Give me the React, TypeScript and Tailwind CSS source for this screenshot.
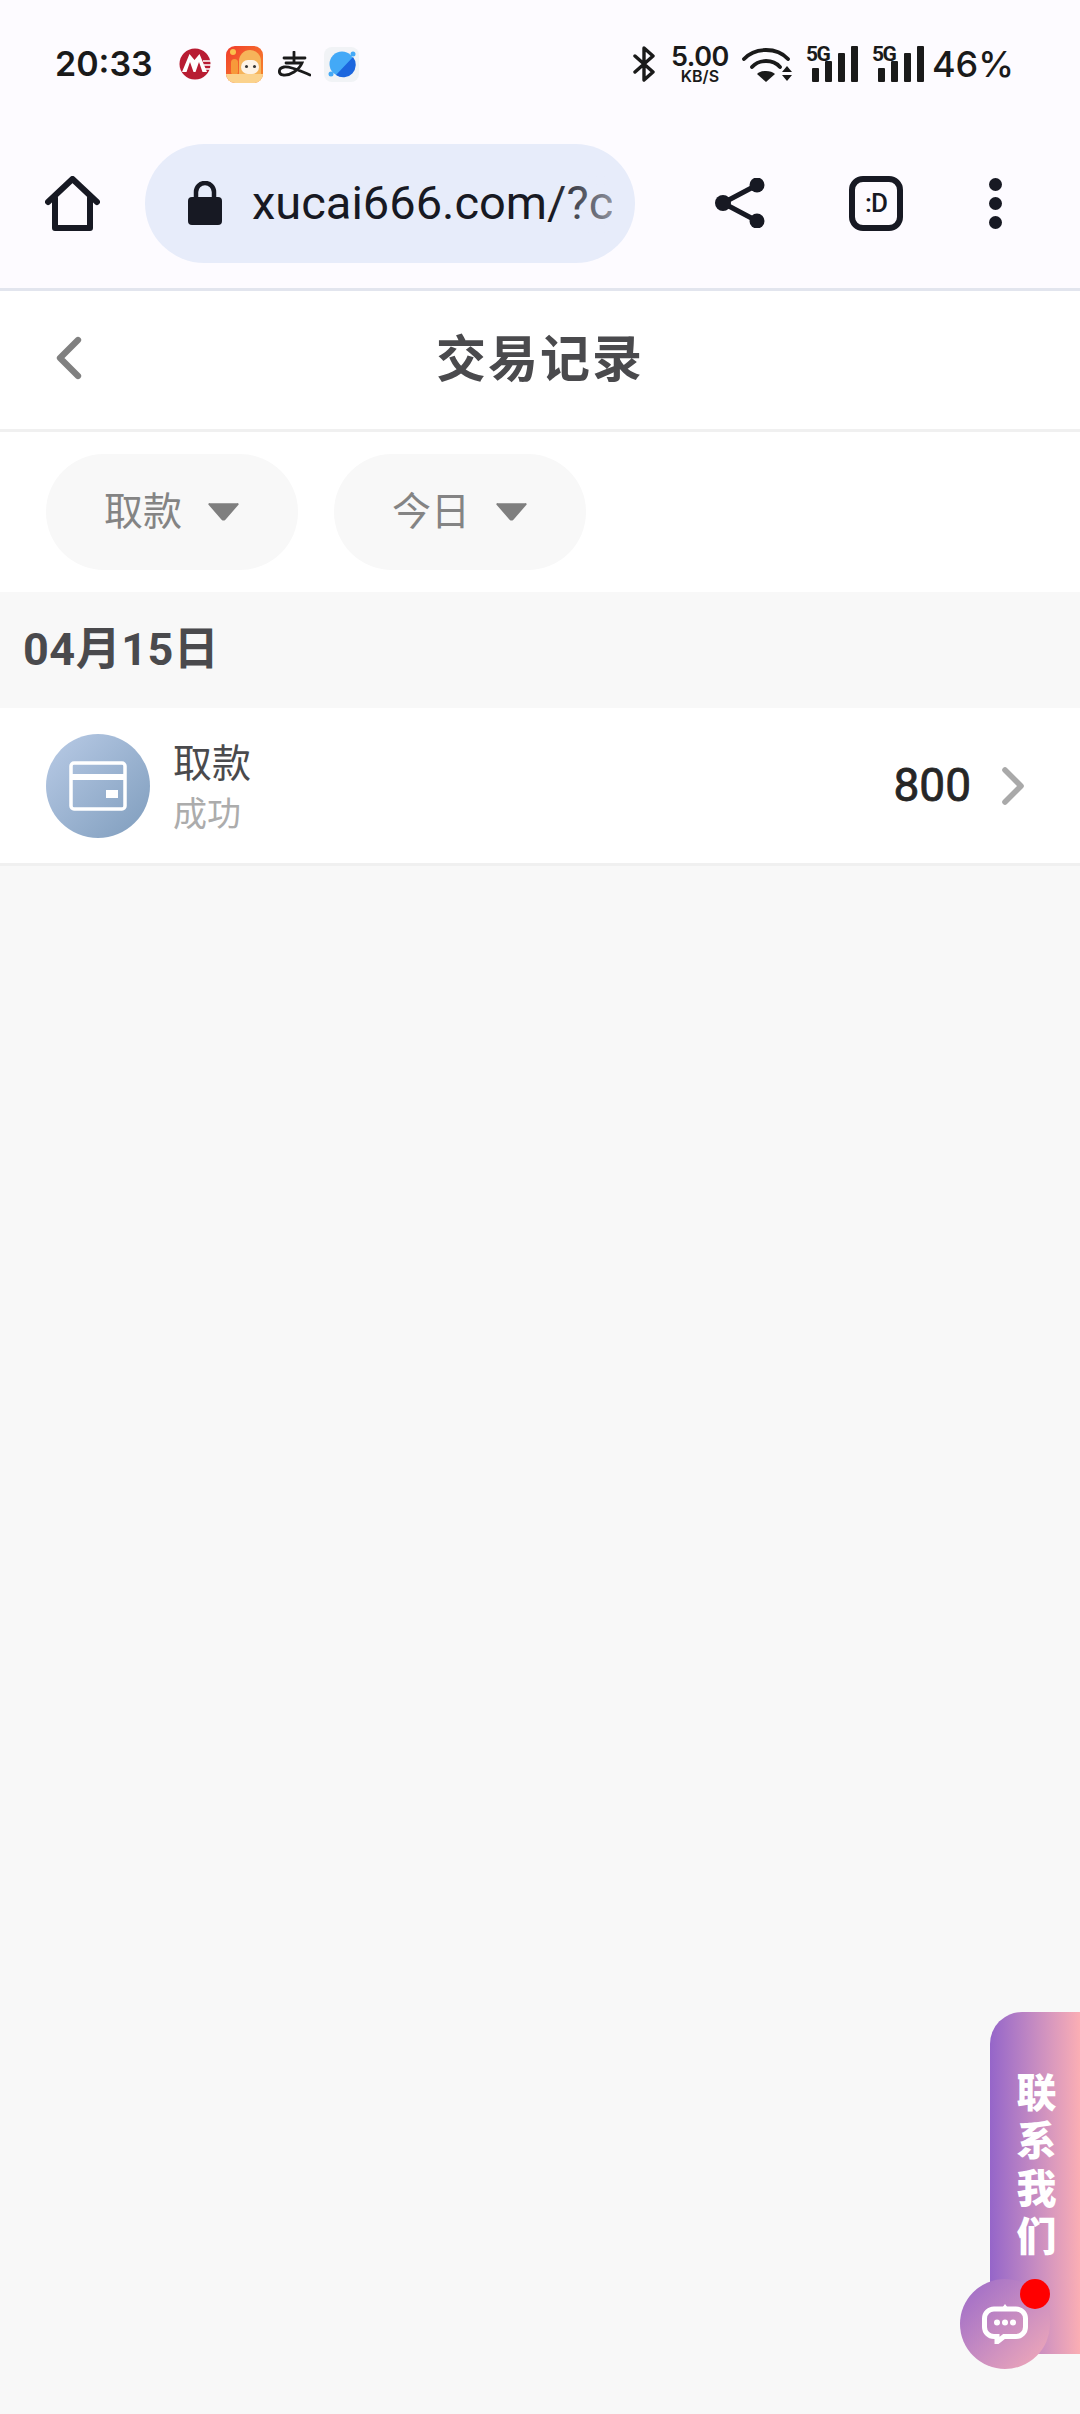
import { ChevronLeft, ChevronRight } from 'lucide-react';

const Signal = () => (
  <div className="relative w-[53px] h-[36px]">
    <span className="absolute left-0 top-[-2px] text-[21px] leading-[21px] font-bold tracking-[-1.5px] text-[#1a1a1a] [font-family:'Roboto',sans-serif]">5G</span>
    <svg viewBox="0 0 53 36" className="absolute inset-0 w-[53px] h-[36px]" fill="#1a1a1a">
      <rect x="6" y="22" width="7" height="14" rx="1" />
      <rect x="19" y="15" width="7" height="21" rx="1" />
      <rect x="32" y="7" width="7" height="29" rx="1" />
      <rect x="45" y="0" width="7" height="36" rx="1" />
    </svg>
  </div>
);

const StatusBar = () => (
  <div className="flex items-center h-[128px] pl-[55px] pr-[66px] text-[#1a1a1a] [font-family:'Inter',sans-serif]">
    <span className="text-[34px] font-semibold leading-none w-[124px]">20:33</span>
    <div className="flex items-center">
      {/* bank logo */}
      <svg viewBox="0 0 32 32" className="w-[32px] h-[32px]">
        <circle cx="16" cy="16" r="15.5" fill="#b81c32" />
        <path d="M3 24 L10.5 6 L15.5 12 L20.5 6 L28 24 Z" fill="#fff" />
        <path d="M7.5 24 L11 14 L14.5 24 Z M16.5 24 L20 14 L23.5 24 Z" fill="#b81c32" />
        <path d="M24 13h8M25 17h7M26 21h5" stroke="#fff" strokeWidth="1.3" />
      </svg>
      {/* orange app */}
      <div className="relative ml-[15px] w-[37px] h-[37px] rounded-[9px] bg-gradient-to-br from-[#f0382b] to-[#f78a2c] overflow-hidden">
        <div className="absolute left-[13px] top-[4px] w-[22px] h-[24px] rounded-t-full bg-[#f6b45a]" />
        <div className="absolute left-[15px] top-[14px] w-[18px] h-[14px] rounded-full bg-[#fdf3e6]" />
        <div className="absolute left-[19px] top-[19px] w-[3px] h-[3px] rounded-full bg-[#333]" />
        <div className="absolute left-[27px] top-[19px] w-[3px] h-[3px] rounded-full bg-[#333]" />
        <div className="absolute left-[4px] top-[3px] w-[6px] h-[6px] rounded-full bg-[#fbc04c]" />
        <div className="absolute left-[5px] top-[13px] w-[7px] h-[16px] rounded-full bg-[#f79a3a]" />
        <div className="absolute left-0 right-0 bottom-0 h-[9px] bg-[#fbd28c]" />
      </div>
      {/* alipay glyph */}
      <svg viewBox="0 0 33 26" className="ml-[15px] w-[33px] h-[26px]" fill="none" stroke="#1a1a1a" strokeWidth="2.8" strokeLinecap="round">
        <path d="M6 7h21M16 1v10M8 12h16C21 19 12 25 5 24 0 23 0 17 6 16c7-1 16 4 26 8" />
      </svg>
      {/* blue planet */}
      <div className="ml-[13px] w-[35px] h-[35px] rounded-[8px] bg-[#f1f3f6] flex items-center justify-center">
        <svg viewBox="0 0 30 30" className="w-[30px] h-[30px]">
          <circle cx="15" cy="15" r="12.5" fill="#43a9f7" />
          <path d="M26 8 A12.5 12.5 0 0 1 9 26 Z" fill="#1c66de" />
          <circle cx="26" cy="5" r="2.5" fill="#43a9f7" />
          <circle cx="4" cy="25" r="2.5" fill="#43a9f7" />
        </svg>
      </div>
    </div>
    <div className="ml-auto flex items-center">
      <svg viewBox="0 0 22 36" className="w-[22px] h-[36px]" fill="none" stroke="#1a1a1a" strokeWidth="3.4" strokeLinejoin="round" strokeLinecap="round">
        <path d="M2 10 L20 26 L11 34 V2 L20 10 L2 26" />
      </svg>
      <div className="ml-[15px] w-[60px] flex flex-col items-center font-semibold">
        <span className="text-[27px] leading-[24px] tracking-[-0.5px]">5.00</span>
        <span className="text-[16px] leading-[14px]">KB/S</span>
      </div>
      <svg viewBox="0 0 50 36" className="ml-[12px] w-[50px] h-[36px]" fill="#1a1a1a">
        <g fill="none" stroke="#1a1a1a" strokeWidth="3.8" strokeLinecap="round">
          <path d="M2 13 C13 1 35 1 46 13" />
          <path d="M10 21 C17 13 31 13 38 21" />
        </g>
        <path d="M15 28 C19 24 29 24 33 28 L24 36 Z" />
        <path d="M40 26 L45 20 L50 26 Z M40 29 L50 29 L45 35 Z" />
      </svg>
      <div className="ml-[14px]"><Signal /></div>
      <div className="ml-[13px]"><Signal /></div>
      <span className="ml-[7px] text-[36px] font-medium leading-none">46%</span>
    </div>
  </div>
);

const Toolbar = () => (
  <div className="flex items-center h-[163px] pb-[10px] pl-[45px] border-b-[3px] border-[#e2e5ee]">
    <svg viewBox="0 0 55 55" className="w-[55px] h-[55px]" fill="none" stroke="#171923" strokeWidth="6" strokeLinejoin="round" strokeLinecap="round">
      <path d="M3 26 L27.5 3 L52 26" />
      <path d="M10 22 V52 H45 V22" />
    </svg>
    <div className="ml-[45px] w-[490px] h-[119px] rounded-full bg-[#e7ecfa] flex items-center pl-[43px] pr-[23px]">
      <svg viewBox="0 0 34 44" className="w-[34px] h-[44px] shrink-0" fill="#171923">
        <path d="M8 18 V11 a9 9 0 0 1 18 0 V18" fill="none" stroke="#171923" strokeWidth="4.5" />
        <rect x="0" y="16" width="34" height="28" rx="4" />
      </svg>
      <div className="relative ml-[30px] flex-1 overflow-hidden">
        <span className="block whitespace-nowrap text-[47px] leading-[60px] text-[#171923] [font-family:'Roboto',sans-serif]">xucai666.com/?c</span>
        <div className="absolute right-0 top-0 bottom-0 w-[60px] bg-gradient-to-r from-[#e7ecfa00] to-[#e7ecfa90]" />
      </div>
    </div>
    <svg viewBox="0 0 50 50" className="ml-[80px] w-[50px] h-[50px]" fill="#171923" stroke="#171923">
      <path d="M8 25 L42 7 M8 25 L42 43" strokeWidth="5" fill="none" />
      <circle cx="8" cy="25" r="8" stroke="none" />
      <circle cx="42" cy="7" r="7.5" stroke="none" />
      <circle cx="42" cy="43" r="7.5" stroke="none" />
    </svg>
    <div className="ml-[84px] w-[54px] h-[55px] rounded-[14px] border-[6px] border-[#171923] flex items-center justify-center text-[26px] font-medium tracking-[-1px] text-[#171923] [font-family:'Roboto',sans-serif]">:D</div>
    <div className="ml-[86px] flex flex-col gap-[6px]">
      <span className="w-[13px] h-[13px] rounded-full bg-[#171923]" />
      <span className="w-[13px] h-[13px] rounded-full bg-[#171923]" />
      <span className="w-[13px] h-[13px] rounded-full bg-[#171923]" />
    </div>
  </div>
);

const Pill = ({ label }: { label: string }) => (
  <div className="w-[252px] h-[116px] rounded-[58px] bg-[#f8f8f8] flex items-center pl-[58px]">
    <span className="text-[39px] leading-none text-[#848484]">{label}</span>
    <svg viewBox="0 0 32 20" className="ml-[26px] w-[31px] h-[20px]" fill="#7f7f7f">
      <path d="M2 1 H30 a1 1 0 0 1 1 2 L18 18 a3 3 0 0 1 -4 0 L1 3 a1 1 0 0 1 1 -2 Z" />
    </svg>
  </div>
);

export default function App() {
  return (
    <div className="relative h-[2414px] w-[1080px] overflow-hidden bg-[#f8f8f8] [font-family:'Roboto','Noto_Sans_CJK_SC',sans-serif]">
      <div className="bg-[#fdfbff]">
        <StatusBar />
        <Toolbar />
      </div>

      {/* page header */}
      <div className="relative flex items-center justify-center h-[141px] pb-[10px] bg-white border-b-[3px] border-[#f0f0f0]">
        <ChevronLeft className="absolute left-[33px] top-[31px] w-[72px] h-[72px] text-[#808080]" strokeWidth={2.1} />
        <h1 className="text-[50px] leading-[60px] font-bold tracking-[2px] text-[#4a4a4d] [font-family:'Noto_Sans_CJK_SC',sans-serif]">交易记录</h1>
      </div>

      {/* filters */}
      <div className="flex gap-[36px] h-[160px] pl-[46px] pt-[22px] bg-white">
        <Pill label="取款" />
        <Pill label="今日" />
      </div>

      {/* date */}
      <div className="flex items-center h-[116px] pl-[23px] text-[45px] font-bold text-[#4a4a4d] tracking-[0.5px]">04月15日</div>

      {/* record */}
      <div className="flex items-center h-[158px] pl-[46px] pr-[35px] bg-white border-b-[3px] border-[#f0f0f0]">
        <div className="w-[104px] h-[104px] rounded-full bg-gradient-to-br from-[#b9cbe6] to-[#7f9dbd] flex items-center justify-center">
          <svg viewBox="0 0 58 50" className="w-[58px] h-[50px]" fill="none">
            <rect x="2" y="2" width="54" height="46" rx="3" stroke="#fff" strokeWidth="3.5" />
            <rect x="2" y="13" width="54" height="6" fill="#fff" />
            <rect x="37" y="29" width="12" height="8" fill="#fff" />
          </svg>
        </div>
        <div className="ml-[23px] flex flex-col gap-[3px] pt-[6px]">
          <span className="text-[39px] leading-[48px] text-[#4a4a4d]">取款</span>
          <span className="text-[34px] leading-[46px] text-[#acacac]">成功</span>
        </div>
        <span className="ml-auto text-[46px] font-normal text-[#262626] [-webkit-text-stroke:0.8px_#262626]">800</span>
        <ChevronRight className="ml-[10px] w-[64px] h-[64px] text-[#a9a9a9]" strokeWidth={2.1} />
      </div>

      {/* contact widget */}
      <div className="absolute left-[990px] top-[2012px] w-[90px] h-[342px] rounded-tl-[32px] rounded-bl-[48px] bg-gradient-to-r from-[#9565c9] to-[#fbaeb4] flex flex-col items-center gap-[8px] pt-[58px] pl-[3px] text-[40px] leading-[40px] font-black text-white [font-family:'Noto_Sans_CJK_SC',sans-serif]">
        <span>联</span>
        <span>系</span>
        <span>我</span>
        <span>们</span>
      </div>
      <div className="absolute left-[960px] top-[2279px] w-[90px] h-[90px] rounded-full bg-gradient-to-br from-[#9a68c8] to-[#f5abb6] flex items-center justify-center">
        <svg viewBox="0 0 46 40" className="w-[46px] h-[40px]">
          <path d="M12 5 H34 a9.5 9.5 0 0 1 9.5 9.5 V23 a9.5 9.5 0 0 1 -9.5 9.5 H22 L15 38 V32.5 H12 a9.5 9.5 0 0 1 -9.5 -9.5 V14.5 a9.5 9.5 0 0 1 9.5 -9.5 Z" fill="none" stroke="#fff" strokeWidth="5" />
          <path d="M23 0 L26 4 H20 Z" fill="#fff" />
          <circle cx="15" cy="18.5" r="3" fill="#fff" />
          <circle cx="23" cy="18.5" r="3" fill="#fff" />
          <circle cx="31" cy="18.5" r="3" fill="#fff" />
        </svg>
      </div>
      <div className="absolute left-[1020px] top-[2279px] w-[30px] h-[30px] rounded-full bg-[#ff0000]" />
    </div>
  );
}
